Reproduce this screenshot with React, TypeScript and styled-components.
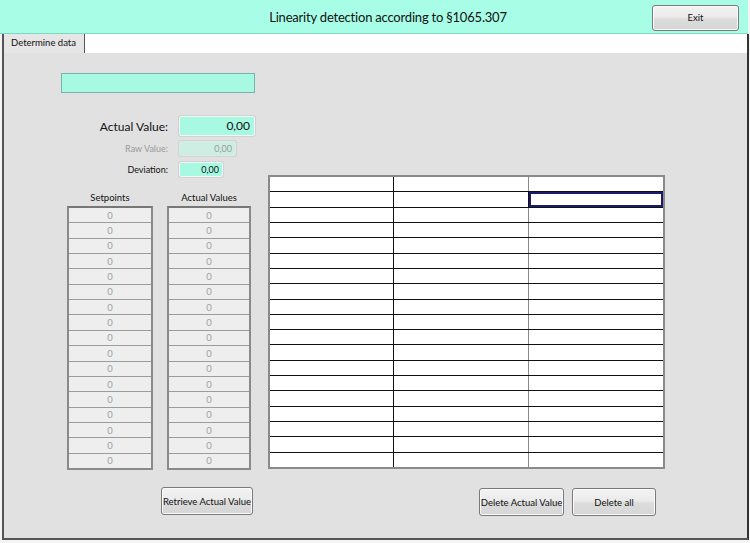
import React from "react";
import styled, { createGlobalStyle } from "styled-components";

const Global = createGlobalStyle`
  html, body { margin: 0; padding: 0; background: #f4f4f4; }
  body { font-family: "Lato", "Open Sans", sans-serif; }
  * { box-sizing: border-box; }
`;

const Page = styled.div`
  width: 750px;
  height: 543px;
  display: flex;
  flex-direction: column;
  background: #f4f4f4;
`;

const Header = styled.header`
  height: 34px;
  width: 748px;
  background: #a8fde6;
  border-bottom: 1px solid #7fd8c2;
  display: flex;
  align-items: center;
  flex-shrink: 0;
`;

const Title = styled.h1`
  margin: 0;
  flex: 1;
  text-align: center;
  font-size: 13px;
  letter-spacing: -0.2px;
  font-weight: 400;
  color: #111;
  padding-left: 124px;
`;

const Button = styled.button<{ $w: number; $h?: number }>`
  width: ${(p) => p.$w}px;
  height: ${(p) => p.$h ?? 28}px;
  font-family: "Lato", "Open Sans", sans-serif;
  font-size: 9.5px;
  color: #111;
  background: linear-gradient(#f3f3f3 0%, #ebebeb 45%, #dcdcdc 55%, #d6d6d6 100%);
  border: 1px solid #7a7a7a;
  border-radius: 3px;
  box-shadow: inset 0 0 0 1px #fbfbfb;
  padding: 0;
  white-space: nowrap;
  flex-shrink: 0;
`;

const ExitWrap = styled.div`
  margin: 2px 9px 0 0;
`;

const Frame = styled.div`
  margin-left: 2px;
  width: 747px;
  height: 506px;
  border-left: 2px solid #555;
  border-right: 2px solid #333;
  border-bottom: 2px solid #555;
  display: flex;
  flex-direction: column;
`;

const TabStrip = styled.div`
  height: 19px;
  background: #fff;
  display: flex;
  flex-shrink: 0;
`;

const Tab = styled.div`
  width: 81px;
  height: 19px;
  background: #e6e6e6;
  border-right: 1px solid #555;
  font-size: 9.5px;
  color: #111;
  padding: 3px 0 0 7px;
`;

const Body = styled.div`
  flex: 1;
  background: #e1e1e1;
  display: flex;
`;

const LeftCol = styled.div`
  width: 264px;
  display: flex;
  flex-direction: column;
  padding-top: 20px;
`;

const TealBar = styled.div`
  margin-left: 57px;
  width: 194px;
  height: 20px;
  background: #a7f9e2;
  border: 1px solid #78b4ae;
`;

const Form = styled.div`
  margin-top: 23px;
  display: grid;
  grid-template-columns: 164px auto;
  column-gap: 11px;
  align-items: center;
`;

const Label = styled.div<{ $variant: "big" | "faded" | "small" }>`
  text-align: right;
  font-size: ${(p) => (p.$variant === "big" ? 12 : 9)}px;
  color: ${(p) => (p.$variant === "faded" ? "#9a9a9a" : "#111")};
`;

const ValueBox = styled.div<{ $w: number; $h: number; $faded?: boolean; $big?: boolean }>`
  width: ${(p) => p.$w}px;
  height: ${(p) => p.$h}px;
  background: ${(p) => (p.$faded ? "#cdeee2" : "#a7f9e2")};
  border: 1px solid ${(p) => (p.$faded ? "#d9ece6" : "#f4f4f4")};
  box-shadow: 0 0 0 1px #d2d2d2;
  border-radius: 2px;
  text-align: right;
  padding-right: ${(p) => (p.$big ? 4 : 3)}px;
  font-size: ${(p) => (p.$big ? 12 : 9)}px;
  line-height: ${(p) => p.$h - 2}px;
  color: ${(p) => (p.$faded ? "#9a9a9a" : "#111")};
`;

const Gap = styled.div<{ $h: number }>`
  grid-column: 1 / 3;
  height: ${(p) => p.$h}px;
`;

const Lists = styled.div`
  margin-top: 12px;
  margin-left: 63px;
  display: flex;
  gap: 14px;
`;

const ListCol = styled.div<{ $w: number }>`
  width: ${(p) => p.$w}px;
  display: flex;
  flex-direction: column;
  align-items: center;
`;

const ListHead = styled.div`
  font-size: 9.5px;
  color: #111;
  height: 17px;
  padding-top: 3px;
`;

const List = styled.div`
  width: 100%;
  height: 264px;
  border: 2px solid #8a8a8a;
  border-top-color: #777;
  display: grid;
  grid-template-rows: repeat(17, 1fr);
  background: #9c9c9c;
  row-gap: 1px;
`;

const ListCell = styled.div`
  background: #eeeeee;
  font-size: 9.5px;
  color: #a0a0a0;
  text-align: center;
  display: flex;
  align-items: center;
  justify-content: center;
`;

const RetrieveWrap = styled.div`
  margin-top: 17px;
  margin-left: 157px;
`;

const RightCol = styled.div`
  display: flex;
  flex-direction: column;
  padding-top: 122px;
`;

const Table = styled.div`
  width: 397px;
  height: 294px;
  border: 2px solid #8a8a8a;
  background: #111;
  display: grid;
  grid-template-columns: 123px 134px 1fr;
  grid-template-rows: repeat(19, 1fr);
  gap: 1px;
`;

const Cell = styled.div<{ $last?: boolean; $sel?: boolean }>`
  background: #fff;
  box-shadow: ${(p) =>
    p.$sel
      ? "inset 0 0 0 2px #1a1a6e"
      : p.$last
      ? "-1px 0 0 0 #8a8a8a"
      : "none"};
`;

const ButtonRow = styled.div`
  margin-top: 19px;
  margin-right: 9px;
  display: flex;
  justify-content: flex-end;
  gap: 8px;
`;

export default function App() {
  const rows = Array.from({ length: 17 });
  const tRows = Array.from({ length: 19 });
  return (
    <Page>
      <Global />
      <Header>
        <Title>Linearity detection according to §1065.307</Title>
        <ExitWrap>
          <Button $w={87} $h={26}>Exit</Button>
        </ExitWrap>
      </Header>
      <Frame>
        <TabStrip>
          <Tab>Determine data</Tab>
        </TabStrip>
        <Body>
          <LeftCol>
            <TealBar />
            <Form>
              <Label $variant="big">Actual Value:</Label>
              <ValueBox $w={76} $h={20} $big>0,00</ValueBox>
              <Gap $h={5} />
              <Label $variant="faded">Raw Value:</Label>
              <ValueBox $w={57} $h={15} $faded>0,00</ValueBox>
              <Gap $h={6} />
              <Label $variant="small">Deviation:</Label>
              <ValueBox $w={44} $h={15}>0,00</ValueBox>
            </Form>
            <Lists>
              <ListCol $w={86}>
                <ListHead>Setpoints</ListHead>
                <List>
                  {rows.map((_, i) => (
                    <ListCell key={i}>0</ListCell>
                  ))}
                </List>
              </ListCol>
              <ListCol $w={84}>
                <ListHead>Actual Values</ListHead>
                <List>
                  {rows.map((_, i) => (
                    <ListCell key={i}>0</ListCell>
                  ))}
                </List>
              </ListCol>
            </Lists>
            <RetrieveWrap>
              <Button $w={92}>Retrieve Actual Value</Button>
            </RetrieveWrap>
          </LeftCol>
          <RightCol>
            <Table>
              {tRows.map((_, r) =>
                [0, 1, 2].map((c) => (
                  <Cell key={`${r}-${c}`} $last={c === 2} $sel={r === 1 && c === 2} />
                ))
              )}
            </Table>
            <ButtonRow>
              <Button $w={85}>Delete Actual Value</Button>
              <Button $w={84}>Delete all</Button>
            </ButtonRow>
          </RightCol>
        </Body>
      </Frame>
    </Page>
  );
}
